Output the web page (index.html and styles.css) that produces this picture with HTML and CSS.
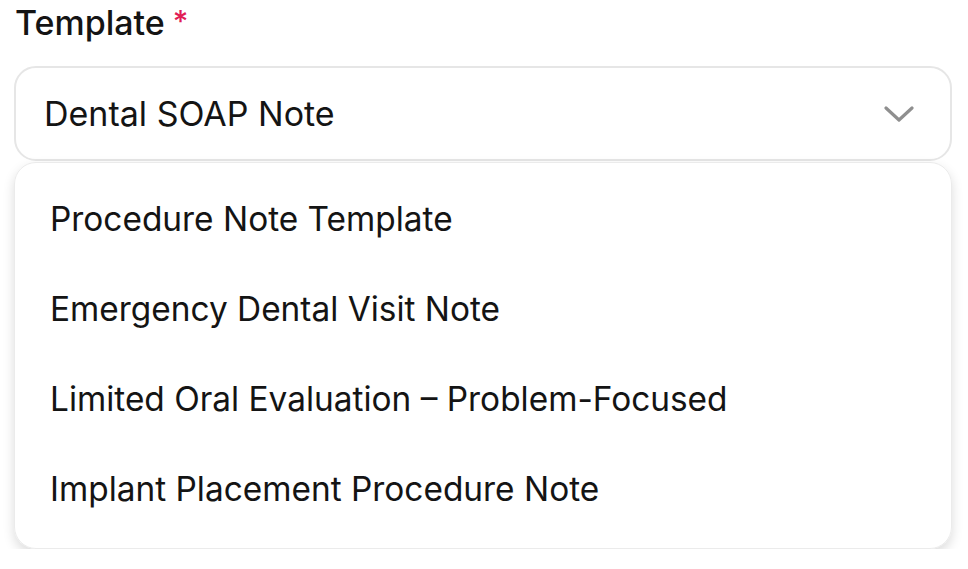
FILE: index.html
```html
<!DOCTYPE html>
<html lang="en">
<head>
<meta charset="utf-8">
<link rel="stylesheet" href="styles.css">
</head>
<body>
<div class="field">
  <label class="label">Template<span class="req">*</span></label>
  <div class="select">
    <span class="value">Dental SOAP Note</span>
    <svg class="chev" width="30" height="18" viewBox="0 0 30 18"><path d="M2 3 L15 15 L28 3" fill="none" stroke="#8f8f8f" stroke-width="3.2" stroke-linecap="round" stroke-linejoin="round"/></svg>
  </div>
  <ul class="menu">
    <li class="item">Procedure Note Template</li>
    <li class="item">Emergency Dental Visit Note</li>
    <li class="item">Limited Oral Evaluation – Problem-Focused</li>
    <li class="item">Implant Placement Procedure Note</li>
  </ul>
</div>
</body>
</html>
```
FILE: styles.css
```css
html, body {
  margin: 0;
  padding: 0;
  background: #ffffff;
}
body {
  font-family: Inter, "Noto Sans", sans-serif;
  color: #141414;
}
.field {
  width: 938px;
  margin-left: 14px;
  padding-top: 3px;
  display: flex;
  flex-direction: column;
}
.label {
  font-size: 34px;
  line-height: 40px;
  font-weight: 500;
  padding-left: 1px;
  display: flex;
  align-items: flex-start;
  gap: 8px;
}
.req {
  color: #e11d55;
  font-size: 30px;
  line-height: 36px;
}
.select {
  margin-top: 23px;
  height: 91px;
  border: 2px solid #e6e6e6;
  border-radius: 22px;
  display: flex;
  align-items: center;
  justify-content: space-between;
  padding: 0 36px 0 28px;
  font-size: 34px;
}
.chev {
  display: block;
}
.menu {
  list-style: none;
  margin: 1px 0 0 0;
  padding: 11px 0 14px 0;
  border: 1px solid #ebebeb;
  border-radius: 22px;
  box-shadow: 0 5px 12px rgba(0, 0, 0, 0.14);
}
.item {
  height: 90px;
  display: flex;
  align-items: center;
  padding-left: 35px;
  font-size: 33.4px;
}
```
